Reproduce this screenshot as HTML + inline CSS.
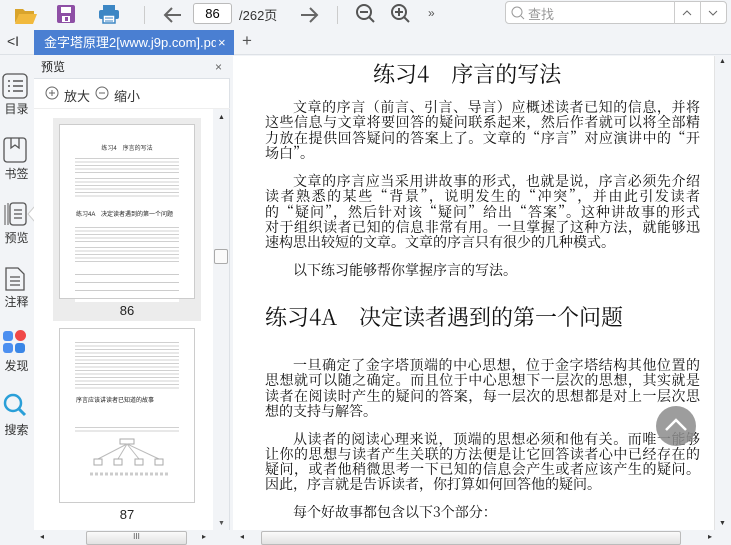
<!DOCTYPE html>
<html><head><meta charset="utf-8"><style>
*{margin:0;padding:0;box-sizing:border-box}
body{width:731px;height:545px;overflow:hidden;background:#f2f4f7;font-family:"Liberation Sans","Noto Sans CJK SC",sans-serif;position:relative}
.abs{position:absolute}
.tb{top:0;left:0;width:731px;height:30px;background:#f2f4f7}
.tabbar{top:30px;left:0;width:731px;height:25px;background:#f2f4f7;border-bottom:1px solid #dde1e6}
.tab{left:34px;top:30px;width:200px;height:25px;background:#4a7fd2;color:#fff;font-size:13px;line-height:25px}
.side{top:55px;left:0;width:33px;height:490px;background:#f2f4f7}
.sl{font-size:12px;color:#333;width:33px;text-align:center}
.panel{top:55px;left:34px;width:196px;height:490px;background:#fff;border-right:1px solid #dde1e6}
.ph{top:55px;left:34px;width:196px;height:24px;background:#f2f4f7;border-bottom:1px solid #dde1e6;font-size:12px;line-height:24px;padding-left:7px;color:#222}
.main{top:56px;left:233px;width:481px;height:474px;background:#fff}
.vs{top:56px;left:714px;width:17px;height:474px;background:#f2f4f7;border-left:1px solid #e3e3e3}
.hs{top:530px;left:34px;width:697px;height:15px;background:#f2f4f7}
.serif{font-family:"Noto Serif CJK SC","Liberation Serif",serif;color:#111}
.ln{position:absolute;left:265px;width:435px;font-size:14px;line-height:15px;text-align:justify;text-align-last:justify;white-space:nowrap;}
.ln.l{text-align-last:left}
.thumb{background:#fff;border:1px solid #ccc}
.tl{background:repeating-linear-gradient(#fff 0 1px,#d0d0d0 1px 2px,#fff 2px 3.5px)}
</style></head><body>
<div class="abs tb"></div>
<svg class="abs" style="left:14px;top:5px" width="24" height="20"><path d="M1 4h8l2 2h9v3H6L1 18z" fill="#d9a42c"/><path d="M5 9h18l-4 10H1z" fill="#f1b93d"/></svg>
<svg class="abs" style="left:56px;top:4px" width="20" height="20"><rect x="1" y="1" width="18" height="18" rx="2" fill="#8e4fa5"/><rect x="5" y="3" width="10" height="6" fill="#fff"/><rect x="6" y="12" width="8" height="6" fill="#fff"/><rect x="9" y="13" width="3" height="4" fill="#8e4fa5"/></svg>
<svg class="abs" style="left:98px;top:4px" width="22" height="20"><rect x="5" y="1" width="12" height="5" fill="#3c86c4"/><rect x="1" y="6" width="20" height="9" rx="2" fill="#3c86c4"/><rect x="5" y="11" width="12" height="8" fill="#fff" stroke="#3c86c4" stroke-width="1.5"/><path d="M7 14h8M7 17h8" stroke="#3c86c4"/></svg>
<div class="abs" style="left:144px;top:6px;width:1px;height:18px;background:#ccc"></div>
<svg class="abs" style="left:163px;top:5px" width="20" height="20"><path d="M18 10H3M9 3L2 10l7 7" stroke="#666" stroke-width="2" fill="none"/></svg>
<div class="abs" style="left:193px;top:3px;width:39px;height:21px;border:1px solid #bbb;border-radius:3px;background:#fff;font-size:13px;line-height:19px;text-align:center">86</div>
<div class="abs" style="left:239px;top:5px;font-size:13px;color:#333">/262页</div>
<svg class="abs" style="left:299px;top:5px" width="20" height="20"><path d="M2 10h15M11 3l7 7-7 7" stroke="#666" stroke-width="2" fill="none"/></svg>
<div class="abs" style="left:337px;top:6px;width:1px;height:18px;background:#ccc"></div>
<svg class="abs" style="left:355px;top:3px" width="22" height="22"><circle cx="9" cy="9" r="7" stroke="#555" stroke-width="2" fill="none"/><path d="M5 9h8M14 14l5 5" stroke="#555" stroke-width="2"/></svg>
<svg class="abs" style="left:390px;top:3px" width="22" height="22"><circle cx="9" cy="9" r="7" stroke="#555" stroke-width="2" fill="none"/><path d="M5 9h8M9 5v8M14 14l5 5" stroke="#555" stroke-width="2"/></svg>
<div class="abs" style="left:428px;top:6px;font-size:12px;color:#555">»</div>
<div class="abs" style="left:505px;top:1px;width:222px;height:23px;border:1px solid #c8c8c8;border-radius:4px;background:#fff"></div>
<svg class="abs" style="left:511px;top:6px" width="14" height="14"><circle cx="6" cy="6" r="5" stroke="#999" fill="none"/><path d="M10 10l3 3" stroke="#999"/></svg>
<div class="abs" style="left:528px;top:4px;font-size:13px;color:#999">查找</div>
<div class="abs" style="left:674px;top:1px;width:1px;height:23px;background:#ccc"></div>
<div class="abs" style="left:700px;top:1px;width:1px;height:23px;background:#ccc"></div>
<svg class="abs" style="left:682px;top:9px" width="10" height="8"><path d="M1 6l4-4 4 4" stroke="#666" fill="none"/></svg>
<svg class="abs" style="left:708px;top:9px" width="10" height="8"><path d="M1 2l4 4 4-4" stroke="#666" fill="none"/></svg>

<div class="abs tabbar"></div>
<div class="abs" style="left:7px;top:33px;font-size:14px;color:#333">&lt;I</div>
<div class="abs tab"><span style="position:absolute;left:10px;width:172px;overflow:hidden;white-space:nowrap">金字塔原理2[www.j9p.com].pd</span><span style="position:absolute;left:184px">×</span></div>
<div class="abs" style="left:242px;top:31px;font-size:17px;color:#555">+</div>

<div class="abs side"></div>
<svg class="abs" style="left:2px;top:73px" width="26" height="26"><rect x="1" y="1" width="24" height="24" rx="4" stroke="#555" stroke-width="1.3" fill="none"/><path d="M6 8h2M11 8h10M6 13h2M11 13h10M6 18h2M11 18h10" stroke="#555" stroke-width="1.5"/></svg>
<div class="abs sl" style="top:100px">目录</div>
<svg class="abs" style="left:3px;top:137px" width="24" height="26"><rect x="1" y="1" width="22" height="24" rx="3" stroke="#555" stroke-width="1.3" fill="none"/><path d="M8 1v10l4-3 4 3V1" stroke="#555" stroke-width="1.3" fill="none"/></svg>
<div class="abs sl" style="top:165px">书签</div>
<svg class="abs" style="left:2px;top:200px" width="26" height="28"><path d="M3 5v20M6 3v22" stroke="#555"/><rect x="8" y="3" width="16" height="22" rx="3" stroke="#555" stroke-width="1.3" fill="#f2f4f7"/><path d="M12 10h8M12 14h8M12 18h8" stroke="#555" stroke-width="1.3"/></svg>
<svg class="abs" style="left:27px;top:206px" width="8" height="16"><path d="M8 0L1 8l7 8" fill="#fff" stroke="#ccc"/></svg>
<div class="abs sl" style="top:229px">预览</div>
<svg class="abs" style="left:4px;top:265px" width="22" height="28"><path d="M2 3h12l6 6v16H2z" stroke="#555" stroke-width="1.3" fill="none"/><path d="M6 12h10M6 16h10M6 20h10" stroke="#555" stroke-width="1.3"/></svg>
<div class="abs sl" style="top:293px">注释</div>
<div class="abs" style="left:3px;top:331px;width:10px;height:10px;border-radius:3px;background:#4c8ff0"></div>
<div class="abs" style="left:15px;top:330px;width:11px;height:11px;border-radius:50%;background:#f04848"></div>
<div class="abs" style="left:3px;top:343px;width:10px;height:10px;border-radius:3px;background:#4c8ff0"></div>
<div class="abs" style="left:15px;top:343px;width:10px;height:10px;border-radius:3px;background:#3a86e6"></div>
<div class="abs sl" style="top:357px">发现</div>
<svg class="abs" style="left:2px;top:392px" width="26" height="28"><circle cx="11" cy="11" r="8" stroke="#2a9fd8" stroke-width="2.5" fill="none"/><path d="M17 17l6 6" stroke="#2a9fd8" stroke-width="3"/></svg>
<div class="abs sl" style="top:421px">搜索</div>

<div class="abs panel"></div>
<div class="abs ph">预览<span style="position:absolute;right:8px;color:#666">×</span></div>
<svg class="abs" style="left:45px;top:86px" width="15" height="15"><circle cx="7" cy="7" r="6" stroke="#666" fill="none"/><path d="M4 7h6M7 4v6" stroke="#666"/></svg>
<div class="abs" style="left:64px;top:86px;font-size:13px;color:#333">放大</div>
<svg class="abs" style="left:95px;top:86px" width="15" height="15"><circle cx="7" cy="7" r="6" stroke="#666" fill="none"/><path d="M4 7h6" stroke="#666"/></svg>
<div class="abs" style="left:114px;top:86px;font-size:13px;color:#333">缩小</div>
<div class="abs" style="left:34px;top:108px;width:196px;height:1px;background:#eee"></div>
<div class="abs" style="left:53px;top:118px;width:148px;height:203px;background:#ececec"></div>
<div class="abs thumb" style="left:59px;top:124px;width:136px;height:175px">
<div style="font-size:6px;text-align:center;margin-top:18px;color:#333">练习4　序言的写法</div>
<div class="tl" style="margin:5px 15px 0;height:16px"></div>
<div class="tl" style="margin:4px 15px 0;height:20px"></div>
<div style="font-size:6px;margin:12px 0 0 16px;color:#222">练习4A　决定读者遇到的第一个问题</div>
<div class="tl" style="margin:8px 15px 0;height:16px"></div>
<div class="tl" style="margin:4px 15px 0;height:16px"></div>
<div style="margin:8px 15px 0;height:32px;background:repeating-linear-gradient(#fff 0 4px,#ccc 4px 5px,#fff 5px 8px)"></div>
</div>
<div class="abs" style="left:53px;top:303px;width:148px;text-align:center;font-size:13px;color:#222">86</div>
<div class="abs thumb" style="left:59px;top:328px;width:136px;height:175px">
<div class="tl" style="margin:12px 15px 0;height:50px"></div>
<div style="font-size:6px;margin:4px 0 0 16px;color:#222">序言应该讲读者已知道的故事</div>
<div class="tl" style="margin:22px 15px 0;height:8px"></div>
<svg width="136" height="70" style="display:block"><rect x="60" y="5" width="14" height="5" fill="none" stroke="#aaa"/><path d="M67 10L38 25M67 10L58 25M67 10L79 25M67 10L99 25" stroke="#bbb"/><g fill="none" stroke="#aaa"><rect x="34" y="25" width="8" height="6"/><rect x="54" y="25" width="8" height="6"/><rect x="75" y="25" width="8" height="6"/><rect x="95" y="25" width="8" height="6"/></g><path d="M30 40h78" stroke="#ccc" stroke-dasharray="3 2" stroke-width="3"/></svg>
</div>
<div class="abs" style="left:53px;top:507px;width:148px;text-align:center;font-size:13px;color:#222">87</div>
<div class="abs" style="left:213px;top:109px;width:16px;height:421px;background:#f2f4f7"></div>
<div class="abs" style="left:214px;top:249px;width:14px;height:15px;background:#fafafa;border:1px solid #aaa;border-radius:2px"></div>
<div class="abs" style="left:218px;top:114px;font-size:7px;color:#333">▲</div>
<div class="abs" style="left:218px;top:520px;font-size:7px;color:#555">▼</div>

<div class="abs main"></div>
<div class="abs vs"></div>
<div class="abs" style="left:719px;top:58px;font-size:7px;color:#333">▲</div>
<div class="abs" style="left:719px;top:520px;font-size:7px;color:#333">▼</div>
<div class="abs hs"></div>
<div class="abs" style="left:86px;top:531px;width:101px;height:14px;background:linear-gradient(#fafafa,#e2e2e2);border:1px solid #bbb;border-radius:2px;font-size:8px;text-align:center;color:#555">III</div>
<div class="abs" style="left:40px;top:532px;font-size:8px;color:#333">◂</div>
<div class="abs" style="left:202px;top:532px;font-size:8px;color:#333">▸</div>
<div class="abs" style="left:240px;top:532px;font-size:8px;color:#333">◂</div>
<div class="abs" style="left:261px;top:531px;width:420px;height:14px;background:linear-gradient(#fafafa,#e2e2e2);border:1px solid #bbb;border-radius:2px"></div>
<div class="abs" style="left:708px;top:532px;font-size:8px;color:#333">▸</div>

<div class="serif">
<div class="abs" style="left:373px;top:60px;font-size:22px;line-height:28px">练习4　序言的写法</div>
<div class="ln" style="top:100px;padding-left:28px">文章的序言（前言、引言、导言）应概述读者已知的信息，并将</div>
<div class="ln" style="top:115px">这些信息与文章将要回答的疑问联系起来，然后作者就可以将全部精</div>
<div class="ln" style="top:131px">力放在提供回答疑问的答案上了。文章的“序言”对应演讲中的“开</div>
<div class="ln l" style="top:146px">场白”。</div>
<div class="ln" style="top:174px;padding-left:28px">文章的序言应当采用讲故事的形式，也就是说，序言必须先介绍</div>
<div class="ln" style="top:189px">读者熟悉的某些“背景”，说明发生的“冲突”，并由此引发读者</div>
<div class="ln" style="top:205px">的“疑问”，然后针对该“疑问”给出“答案”。这种讲故事的形式</div>
<div class="ln" style="top:220px">对于组织读者已知的信息非常有用。一旦掌握了这种方法，就能够迅</div>
<div class="ln l" style="top:235px">速构思出较短的文章。文章的序言只有很少的几种模式。</div>
<div class="ln l" style="top:263px;padding-left:28px">以下练习能够帮你掌握序言的写法。</div>
<div class="abs" style="left:265px;top:303px;font-size:22px;line-height:28px">练习4A　决定读者遇到的第一个问题</div>
<div class="ln" style="top:358px;padding-left:28px">一旦确定了金字塔顶端的中心思想，位于金字塔结构其他位置的</div>
<div class="ln" style="top:373px">思想就可以随之确定。而且位于中心思想下一层次的思想，其实就是</div>
<div class="ln" style="top:389px">读者在阅读时产生的疑问的答案，每一层次的思想都是对上一层次思</div>
<div class="ln l" style="top:404px">想的支持与解答。</div>
<div class="ln" style="top:432px;padding-left:28px">从读者的阅读心理来说，顶端的思想必须和他有关。而唯一能够</div>
<div class="ln" style="top:447px">让你的思想与读者产生关联的方法便是让它回答读者心中已经存在的</div>
<div class="ln" style="top:462px">疑问，或者他稍微思考一下已知的信息会产生或者应该产生的疑问。</div>
<div class="ln l" style="top:477px">因此，序言就是告诉读者，你打算如何回答他的疑问。</div>
<div class="ln l" style="top:505px;padding-left:28px">每个好故事都包含以下3个部分：</div>
</div>
<div class="abs" style="left:656px;top:406px;width:40px;height:40px;border-radius:50%;background:rgba(140,140,140,0.85)"></div>
<svg class="abs" style="left:656px;top:406px" width="40" height="40"><path d="M10 24l10-10 10 10" stroke="#fff" stroke-width="2.5" fill="none"/></svg>
</body></html>
